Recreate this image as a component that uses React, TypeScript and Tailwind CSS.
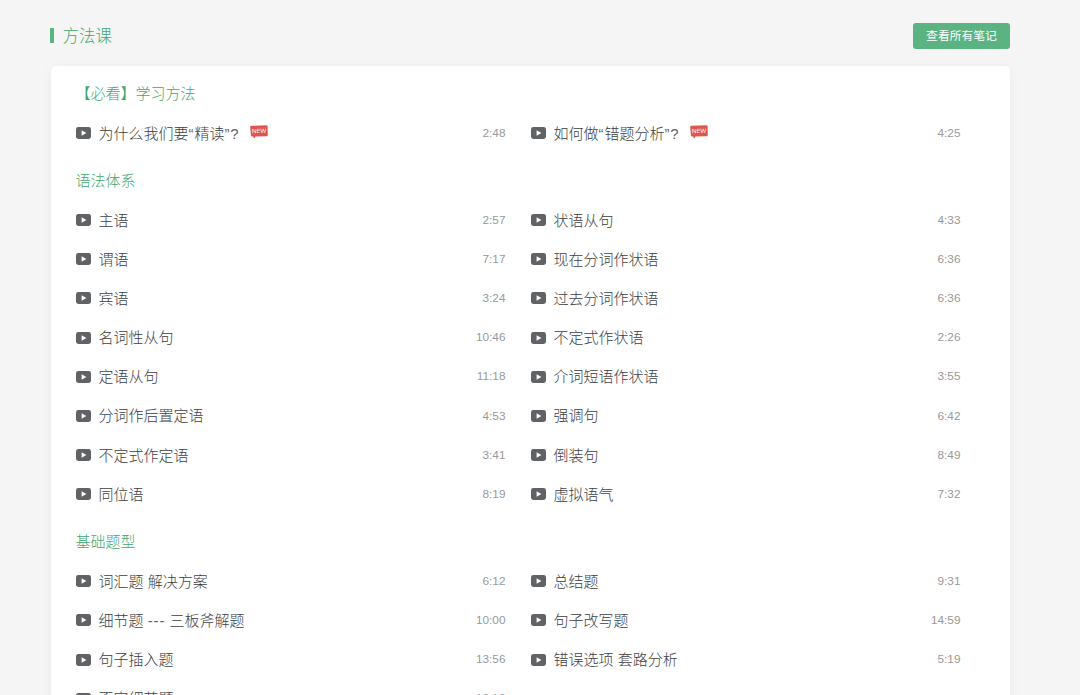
type Lesson = {
  title: string;
  time: string;
  isNew?: boolean;
};

type Section = {
  name: string;
  lessons: Lesson[];
};

// lessons go left, right, left, right...
const sections: Section[] = [
  {
    name: "【必看】学习方法",
    lessons: [
      { title: "为什么我们要“精读”?", time: "2:48", isNew: true },
      { title: "如何做“错题分析”?", time: "4:25", isNew: true },
    ],
  },
  {
    name: "语法体系",
    lessons: [
      { title: "主语", time: "2:57" },
      { title: "状语从句", time: "4:33" },
      { title: "谓语", time: "7:17" },
      { title: "现在分词作状语", time: "6:36" },
      { title: "宾语", time: "3:24" },
      { title: "过去分词作状语", time: "6:36" },
      { title: "名词性从句", time: "10:46" },
      { title: "不定式作状语", time: "2:26" },
      { title: "定语从句", time: "11:18" },
      { title: "介词短语作状语", time: "3:55" },
      { title: "分词作后置定语", time: "4:53" },
      { title: "强调句", time: "6:42" },
      { title: "不定式作定语", time: "3:41" },
      { title: "倒装句", time: "8:49" },
      { title: "同位语", time: "8:19" },
      { title: "虚拟语气", time: "7:32" },
    ],
  },
  {
    name: "基础题型",
    lessons: [
      { title: "词汇题 解决方案", time: "6:12" },
      { title: "总结题", time: "9:31" },
      { title: "细节题 --- 三板斧解题", time: "10:00" },
      { title: "句子改写题", time: "14:59" },
      { title: "句子插入题", time: "13:56" },
      { title: "错误选项 套路分析", time: "5:19" },
      { title: "否定细节题", time: "10:10" },
    ],
  },
];

function PlayIcon() {
  return (
    <svg className="h-3 w-[15px] shrink-0" viewBox="0 0 15 12">
      <rect width="15" height="12" rx="2.4" fill="#606266" />
      <path d="M5.6 3.2v5.6L10.4 6z" fill="#fff" />
    </svg>
  );
}

function NewBadge() {
  return (
    <svg className="mb-[3px] ml-2.5 h-3.5 w-[18px] shrink-0" viewBox="0 0 18 14">
      <path
        d="M1.2.8 16.6.3q1 0 1 1l.2 8.9q0 1-1 1L5.5 11.5 4 13.8l-.8-2.3H2q-1 0-1.1-1L.2 1.8q0-1 1-1z"
        fill="#dd574c"
      />
      <text
        x="9"
        y="8"
        textAnchor="middle"
        fill="#fff"
        fontSize="6"
        fontFamily="Liberation Sans, sans-serif"
        transform="rotate(-2 9 6)"
      >
        NEW
      </text>
    </svg>
  );
}

// punctuation and dashes are set a little wider than the font gives them
function LessonTitle({ title }: { title: string }) {
  return (
    <span className="ml-2 pt-[1.5px] text-[15px] font-light text-[#3c3e42]">
      {title.split(/([“”?-]+)/).map((part, i) =>
        i % 2 ? (
          <span key={i} className="tracking-[0.9px] text-[#606266]">
            {part}
          </span>
        ) : (
          part
        ),
      )}
    </span>
  );
}

function LessonRow({ lesson }: { lesson: Lesson }) {
  return (
    <li className="flex h-[39.2px] items-center pr-[25px]">
      <PlayIcon />
      <LessonTitle title={lesson.title} />
      {lesson.isNew && <NewBadge />}
      <span className="ml-auto pt-px text-[11.8px] text-[#999]">{lesson.time}</span>
    </li>
  );
}

export default function App() {
  return (
    <div className="h-[695px] overflow-hidden bg-[#f5f5f5] pr-[70px] pl-[50.5px] font-['Liberation_Sans','Noto_Sans_CJK_SC',sans-serif]">
      <header className="flex h-[66px] items-center justify-between pt-[5px]">
        <h1 className="flex items-center text-[16.5px] text-[#3fa86d]">
          <span className="mr-[8.5px] -ml-[0.5px] h-[15px] w-1 bg-[#5ab381]" />
          <span className="pt-0.5 font-light">方法课</span>
        </h1>
        <button className="h-[26px] w-[97px] rounded-[3px] bg-[#5ab381] pt-0.5 text-[11.8px] text-white">
          查看所有笔记
        </button>
      </header>
      <main className="h-[760px] rounded-[5px] bg-white pt-[8.5px] pr-[25px] pl-[25px] shadow-[0_2px_12px_rgba(0,0,0,0.05)]">
        {sections.map((section) => (
          <section key={section.name} className="mb-[8.4px]">
            <h2 className="flex h-[39.2px] items-center pt-px text-[15px] font-light text-[#3fa86d]">
              {section.name}
            </h2>
            <ul className="grid grid-cols-[455px_455px]">
              {section.lessons.map((lesson) => (
                <LessonRow key={lesson.title} lesson={lesson} />
              ))}
            </ul>
          </section>
        ))}
      </main>
    </div>
  );
}
